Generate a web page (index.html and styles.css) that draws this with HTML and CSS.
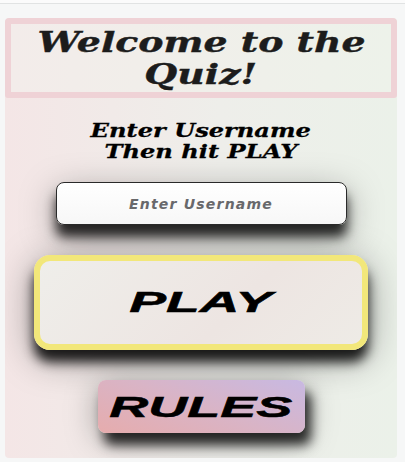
FILE: index.html
```html
<!DOCTYPE html>
<html>
<head>
<meta charset="utf-8">
<link rel="stylesheet" href="styles.css">
</head>
<body>
<div class="topbar"></div>
<div class="page">
  <main class="card">
    <header class="title">
      <h1><span class="wide">Welcome to the</span><span class="wide">Quiz!</span></h1>
    </header>
    <p class="instr"><span class="wide">Enter Username</span><span class="wide">Then hit PLAY</span></p>
    <input class="name" type="text" placeholder="Enter Username">
    <button class="play"><span class="wide">PLAY</span></button>
    <button class="rules"><span class="wide">RULES</span></button>
  </main>
</div>
</body>
</html>
```

FILE: styles.css
```css
html, body {
  margin: 0;
  padding: 0;
  background: #f6f7f7;
}
.topbar {
  height: 3px;
  background: #fbfbfb;
  border-bottom: 1px solid #e1e3e3;
}
.page {
  padding: 14px 8px 4px 5px;
}
.card {
  height: 440px;
  box-sizing: border-box;
  border-radius: 4px;
  background: linear-gradient(90deg, #f4e6e6 0%, #eeeeea 55%, #ebf1e9 100%);
  display: flex;
  flex-direction: column;
  align-items: center;
  overflow: hidden;
}
.title {
  align-self: stretch;
  height: 80px;
  box-sizing: border-box;
  border: 6px solid #efd2d6;
  border-radius: 3px;
  background: linear-gradient(90deg, #f3ecea, #edf2ea);
  display: flex;
  align-items: center;
  justify-content: center;
}
.title h1 {
  margin: 2px 0 0;
  font-family: "DejaVu Serif", serif;
  font-weight: bold;
  font-style: italic;
  font-size: 28px;
  line-height: 32px;
  color: #1c1c1c;
  -webkit-text-stroke: 0.4px #1c1c1c;
  text-align: center;
  display: flex;
  flex-direction: column;
  align-items: center;
}
.wide {
  display: block;
  white-space: nowrap;
  transform-origin: center;
}
.title .wide { transform: scaleX(1.35); }
.instr {
  margin: 22px 0 0;
  font-family: "DejaVu Serif", serif;
  font-weight: bold;
  font-style: italic;
  font-size: 19px;
  line-height: 21px;
  color: #000;
  -webkit-text-stroke: 0.3px #000;
  display: flex;
  flex-direction: column;
  align-items: center;
}
.instr .wide { transform: scaleX(1.27); }
.name {
  margin-top: 20px;
  width: 291px;
  height: 43px;
  box-sizing: border-box;
  border: 1px solid #2a2a2a;
  border-radius: 8px;
  background: linear-gradient(180deg, #ffffff, #f7f7f7);
  box-shadow: 0 12px 12px rgba(0,0,0,0.8), 0 10px 36px rgba(0,0,0,0.35);
  text-align: center;
  font-family: "DejaVu Sans", sans-serif;
  font-weight: bold;
  font-style: italic;
  font-size: 14px;
  outline: none;
}
.name::placeholder {
  color: #68686b;
  letter-spacing: 1.2px;
}
.play {
  margin-top: 30px;
  width: 334px;
  height: 95px;
  box-sizing: border-box;
  border: 6px solid #f2e77a;
  border-radius: 16px;
  background: linear-gradient(135deg, #efeeea, #ede5e2 60%, #eeebe6);
  box-shadow: 0 12px 12px rgba(0,0,0,0.85), 0 8px 38px rgba(0,0,0,0.4);
  font-family: "Liberation Sans", Arial, sans-serif;
  font-weight: bold;
  font-style: italic;
  font-size: 29px;
  color: #000;
  -webkit-text-stroke: 0.5px #000;
  display: flex;
  align-items: center;
  justify-content: center;
  padding: 0;
}
.play .wide { transform: scaleX(1.9); }
.rules {
  margin-top: 30px;
  width: 207px;
  height: 53px;
  box-sizing: border-box;
  border: none;
  border-radius: 8px;
  background: linear-gradient(20deg, #e6acad 0%, #d9b4c6 50%, #c8b9e2 100%);
  box-shadow: 6px 12px 12px rgba(0,0,0,0.8), 0 6px 32px rgba(0,0,0,0.35);
  font-family: "Liberation Sans", Arial, sans-serif;
  font-weight: bold;
  font-style: italic;
  font-size: 30px;
  color: #000;
  -webkit-text-stroke: 0.5px #000;
  display: flex;
  align-items: center;
  justify-content: center;
  padding: 0;
}
.rules .wide { transform: scaleX(1.8); }
```
